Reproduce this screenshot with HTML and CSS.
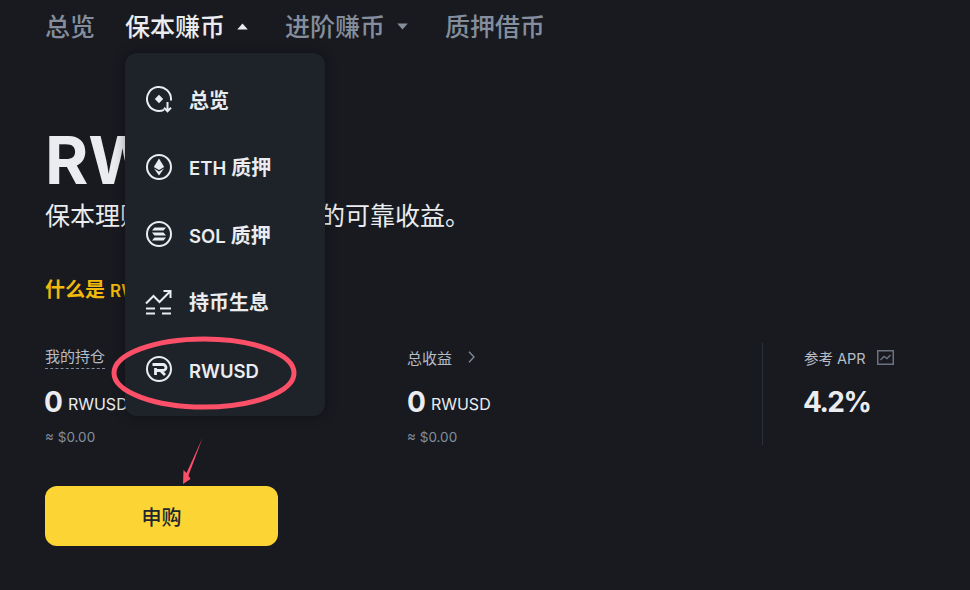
FILE: index.html
```html
<!DOCTYPE html>
<html lang="zh-CN">
<head>
<meta charset="utf-8">
<title>保本赚币</title>
<link rel="stylesheet" href="styles.css">
</head>
<body>
<div class="page">
  <nav class="nav">
    <a class="nav-item">总览</a>
    <a class="nav-item active">保本赚币<svg class="caret" viewBox="0 0 10 6"><path d="M5 .3 9.800 5.700H.2z"/></svg></a>
    <a class="nav-item">进阶赚币<svg class="caret" viewBox="0 0 10 6"><path d="M.2.3h9.600L5 5.700z"/></svg></a>
    <a class="nav-item">质押借币</a>
  </nav>
  <main class="main">
    <h1 class="title">RWUSD</h1>
    <p class="subtitle">保本理财，来自现实资产的可靠收益。</p>
    <p class="whatis">什么是 <span class="whatis-latin">RWUSD？</span></p>
    <section class="stats">
      <div class="stat stat-a">
        <div class="label"><span class="dashed">我的持仓</span></div>
        <div class="value"><b>0</b> <span>RWUSD</span></div>
        <div class="fiat">≈ $0.00</div>
      </div>
      <div class="stat stat-b">
        <div class="label">总收益<svg class="chev" viewBox="0 0 7 12"><path d="M1 .7 6 6l-5 5.300"/></svg></div>
        <div class="value"><b>0</b> <span>RWUSD</span></div>
        <div class="fiat">≈ $0.00</div>
      </div>
      <div class="stat stat-c">
        <div class="label">参考 APR<svg class="chart" viewBox="0 0 17 15"><rect x=".75" y=".75" width="15.500" height="13.500"/><path d="M3.500 10 7 6.500l3 2 3.500-3.500"/></svg></div>
        <div class="value"><b class="apr">4.2%</b></div>
      </div>
    </section>
    <button class="cta">申购</button>
  </main>

  <div class="menu">
    <div class="menu-item">
      <svg class="ico" viewBox="0 0 28 28"><path d="M19 24.900A12 12 0 1 1 26 14v1.500"/><path d="M14 9.800 18.200 14 14 18.200 9.800 14z" class="fill"/><path d="M22.500 17v9M19 22.800l3.500 3.500 3.500-3.500"/></svg>
      <span>总览</span>
    </div>
    <div class="menu-item">
      <svg class="ico" viewBox="0 0 28 28"><circle cx="14" cy="14" r="12"/><path class="fill" d="M14 5.500 19.200 14 14 17 8.800 14z"/><path class="fill" d="M14 18.500 19 15.500 14 22.500 9 15.500z"/></svg>
      <span><span class="latin">ETH</span> 质押</span>
    </div>
    <div class="menu-item">
      <svg class="ico" viewBox="0 0 28 28"><circle cx="14" cy="14" r="12"/><path class="fill" d="M9.500 7.500h11.500l-2.500 3H7zM7 12.500h11.500l2.500 3H9.500zM9.500 17.500H21l-2.500 3H7z"/></svg>
      <span><span class="latin">SOL</span> 质押</span>
    </div>
    <div class="menu-item">
      <svg class="ico" viewBox="0 0 28 28"><path d="M1 15.500 8.500 8l6 6L25 3.500M18.500 3H25.500V10M1 20.500h9M15 20.500h11M1 25.500h9M17 25.500h9"/></svg>
      <span>持币生息</span>
    </div>
    <div class="menu-item">
      <svg class="ico" viewBox="0 0 28 28"><circle cx="14" cy="14" r="12"/><path class="thick" d="M7.500 9.500H18a3 3 0 0 1 0 6H10.500M10.500 13v7M15.500 15.500l4.500 4.500"/></svg>
      <span class="latin rw">RWUSD</span>
    </div>
  </div>

  <svg class="marks" viewBox="0 0 970 590">
    <ellipse cx="204" cy="373" rx="90" ry="34" class="ring"/>
    <path class="arrow" d="M202.500 438 188.500 475.500 190.500 479 183 484 183.500 470 186.500 473z"/>
  </svg>
</div>
</body>
</html>
```
FILE: styles.css
```css
* { box-sizing: border-box; }
html, body { margin: 0; padding: 0; }
body {
  background: #181a20;
  color: #eaecef;
  font-family: "Inter", "Noto Sans CJK SC", sans-serif;
  overflow: hidden;
}
.page { position: relative; width: 970px; height: 590px; overflow: hidden; }

.nav { display: flex; align-items: center; gap: 30px; height: 53px; padding: 0 0 0 45px; }
.nav-item { display: flex; align-items: center; font-size: 25px; font-weight: 500; color: #848e9c; line-height: 32px; white-space: nowrap; }
.nav-item.active { color: #eaecef; }
.caret { width: 11px; height: 7px; margin-left: 12px; margin-right: 7px; fill: currentColor; }

.main { padding: 75px 0 0 45px; }
.title { margin: 0; font-size: 66px; line-height: 64px; font-weight: 700; color: #eaecef; }
.subtitle { margin: 8px 0 0; font-size: 25px; line-height: 32px; color: #eaecef; }
.whatis { margin: 44px 0 0; font-size: 20px; line-height: 28px; font-weight: 600; color: #f0b90b; }
.whatis-latin { font-size: 17px; }

.stats { display: flex; margin-top: 38px; height: 102px; }
.stat-a { width: 362px; }
.stat-b { width: 355px; }
.stat-c { border-left: 1px solid #2b3139; padding-left: 41px; }
.label { display: flex; align-items: center; height: 28px; font-size: 15px; color: #b7bdc6; }
.stat-c .label { font-size: 14.500px; }
.dashed { border-bottom: 1px dashed #848e9c; line-height: 22px; }
.chev { width: 7px; height: 12px; margin-left: 16px; fill: none; stroke: #848e9c; stroke-width: 1.300; }
.chart { width: 17px; height: 15px; margin-left: 11px; fill: none; stroke: #6b7380; stroke-width: 1.500; }
.value { margin-top: 13px; height: 36px; display: flex; align-items: center; gap: 5px; }
.stat-a .value { margin-left: -1px; }
.value b { font-size: 28px; font-weight: 700; color: #eaecef; }
.value .apr { letter-spacing: -1.500px; margin-left: -1px; }
.value span { font-size: 16px; font-weight: 400; color: #eaecef; position: relative; top: 2px; }
.fiat { font-size: 13.500px; line-height: 22px; margin-top: 6px; color: #848e9c; }

.cta {
  display: block; width: 233px; height: 60px; margin-top: 41px;
  border: 0; border-radius: 12px; background: #fcd535; color: #202630;
  font: 500 20px "Inter", "Noto Sans CJK SC", sans-serif;
}

.menu {
  position: absolute; left: 125px; top: 53px; width: 200px; height: 363px;
  background: #1e2329; border-radius: 12px;
  padding: 12.500px 0;
  display: flex; flex-direction: column;
  box-shadow: 0 0 12px rgba(0, 0, 0, .35);
}
.menu-item { display: flex; align-items: center; height: 67.500px; padding-left: 20px; font-size: 20px; font-weight: 600; color: #eaecef; }
.latin { font-size: 18.500px; }
.rw { position: relative; top: 2px; }
.ico { width: 28px; height: 28px; margin-right: 16px; flex: none; fill: none; stroke: #eaecef; stroke-width: 2; }
.ico .fill { fill: #eaecef; stroke: none; }
.ico .thick { stroke-width: 2.800; }

.marks { position: absolute; inset: 0; width: 970px; height: 590px; pointer-events: none; }
.ring { fill: none; stroke: #fb5068; stroke-width: 5; }
.arrow { fill: #fb5068; }
```
